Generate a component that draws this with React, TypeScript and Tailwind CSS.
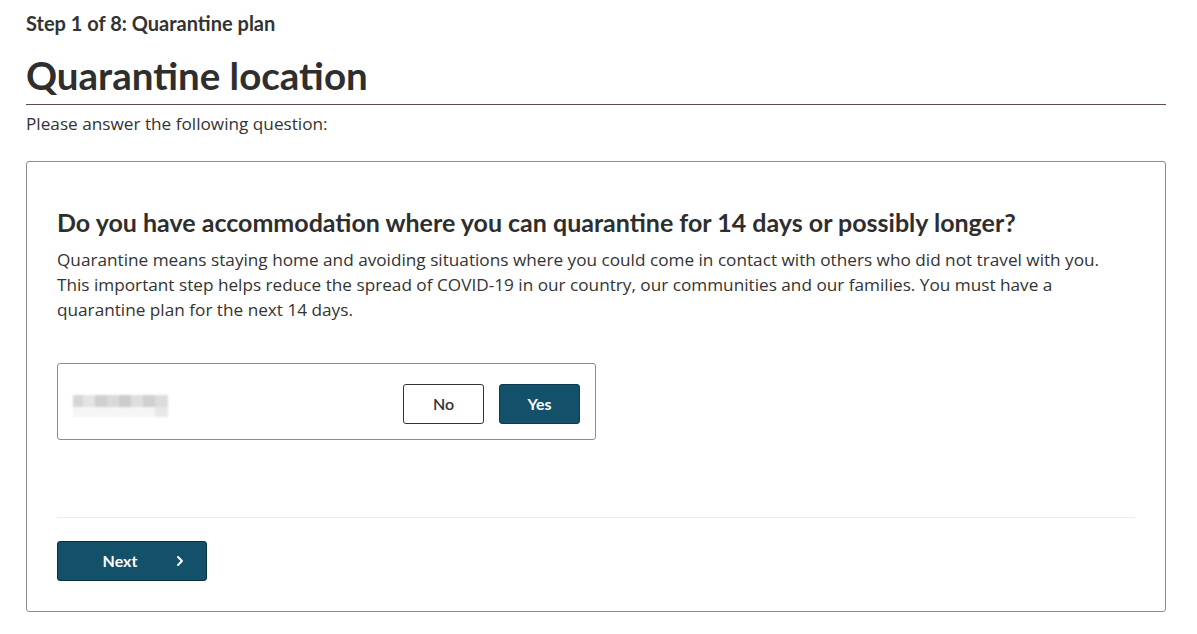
import { ChevronRight } from 'lucide-react'

const lato = "font-['Lato',_'Open_Sans',_sans-serif]"
const open = "font-['Open_Sans',_'Noto_Sans',_sans-serif]"

function Blurred() {
  return (
    <div className="flex flex-col gap-0 blur-[1px]">
      <div className="flex">
        <div className="w-[10px] h-[12px] bg-[#d6d6d6]" />
        <div className="w-[12px] h-[12px] bg-[#e4e4e4]" />
        <div className="w-[12px] h-[12px] bg-[#cfcfcf]" />
        <div className="w-[12px] h-[12px] bg-[#d9d9d9]" />
        <div className="w-[12px] h-[12px] bg-[#cccccc]" />
        <div className="w-[12px] h-[12px] bg-[#dedede]" />
        <div className="w-[12px] h-[12px] bg-[#d0d0d0]" />
        <div className="w-[13px] h-[12px] bg-[#dcdcdc]" />
      </div>
      <div className="flex">
        <div className="w-[82px] h-[10px] bg-[#f6f6f6]" />
        <div className="w-[13px] h-[10px] bg-[#e8e8e8]" />
      </div>
    </div>
  )
}

export default function App() {
  return (
    <div className="min-h-[634px] bg-white pl-[26px] pr-[31px] pt-[11px] text-[#333]">
      <div className={`${lato} text-[20px] font-bold leading-[24px] text-[#333]`}>
        Step 1 of 8: Quarantine plan
      </div>
      <h1 className={`${lato} mt-[17px] text-[38.5px] font-bold leading-[46px] text-[#2e2e2e]`}>
        Quarantine location
      </h1>
      <div className="mt-[6px] h-px bg-[#5b4c4f]" />
      <p className={`${open} mt-[7px] text-[17.2px] leading-[24px] text-[#333]`}>
        Please answer the following question:
      </p>

      <div className="mt-[25px] rounded-[3px] border border-[#8c8c8c] px-[30px] pt-[44px] pb-[30px]">
        <h2 className={`${lato} text-[25px] font-bold leading-[32px] text-[#2e2e2e]`}>
          Do you have accommodation where you can quarantine for 14 days or possibly longer?
        </h2>
        <p className={`${open} mt-[9px] max-w-[1060px] text-[17.2px] leading-[25px] text-[#333]`}>
          Quarantine means staying home and avoiding situations where you could come in contact with others who did not travel with you. This important step helps reduce the spread of COVID-19 in our country, our communities and our families. You must have a quarantine plan for the next 14 days.
        </p>

        <div className="mt-[41px] flex h-[77px] w-[539px] items-center justify-between rounded-[3px] border border-[#8c8c8c] pl-[15px] pr-[15px]">
          <div className="pt-[8px]">
            <Blurred />
          </div>
          <div className="flex gap-[15px] pt-[5px]">
            <button className={`${lato} h-[40px] w-[81px] rounded-[3px] border border-[#333] bg-white text-[16px] font-semibold text-[#333]`}>
              No
            </button>
            <button className={`${lato} h-[40px] w-[81px] rounded-[3px] border border-[#0c3c50] bg-[#13506a] text-[16px] font-bold text-white`}>
              Yes
            </button>
          </div>
        </div>

        <div className="mt-[77px] h-px bg-[#ececec]" />

        <button className={`${lato} relative mt-[23px] flex h-[40px] w-[150px] items-center justify-center rounded-[3px] border border-[#0a2f3f] bg-[#13506a] text-[16px] font-bold text-white`}>
          <span className="mr-[24px]">Next</span>
          <ChevronRight className="absolute right-[18px] h-[16px] w-[16px]" strokeWidth={3} />
        </button>
      </div>
    </div>
  )
}
